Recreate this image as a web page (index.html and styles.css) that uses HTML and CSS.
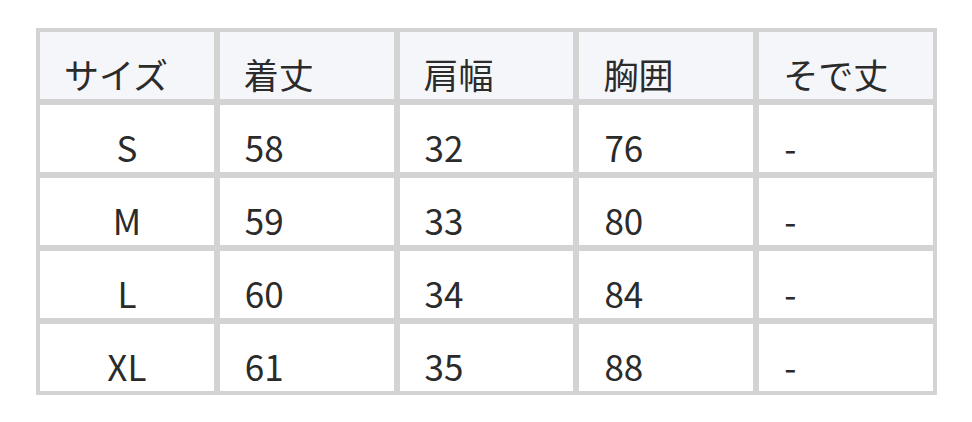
FILE: index.html
```html
<!DOCTYPE html>
<html lang="ja">
<head>
<meta charset="utf-8">
<link rel="stylesheet" href="styles.css">
</head>
<body>
<div class="page">
  <div class="size-table">
    <div class="cell head">サイズ</div>
    <div class="cell head">着丈</div>
    <div class="cell head">肩幅</div>
    <div class="cell head">胸囲</div>
    <div class="cell head">そで丈</div>

    <div class="cell label">S</div>
    <div class="cell">58</div>
    <div class="cell">32</div>
    <div class="cell">76</div>
    <div class="cell">-</div>

    <div class="cell label">M</div>
    <div class="cell">59</div>
    <div class="cell">33</div>
    <div class="cell">80</div>
    <div class="cell">-</div>

    <div class="cell label">L</div>
    <div class="cell">60</div>
    <div class="cell">34</div>
    <div class="cell">84</div>
    <div class="cell">-</div>

    <div class="cell label">XL</div>
    <div class="cell">61</div>
    <div class="cell">35</div>
    <div class="cell">88</div>
    <div class="cell">-</div>
  </div>
</div>
</body>
</html>
```

FILE: styles.css
```css
html, body {
  margin: 0;
  padding: 0;
  background: #ffffff;
}
.page {
  padding: 28px 36px;
}
.size-table {
  box-sizing: border-box;
  width: 901px;
  display: grid;
  grid-template-columns: repeat(5, 1fr);
  grid-auto-rows: 67px;
  gap: 6px;
  padding: 4px;
  background: #d3d3d3;
  font-family: "Noto Sans CJK JP", "Noto Sans", sans-serif;
  font-size: 35px;
  font-weight: 400;
  line-height: 35px;
  color: #2b2b2b;
}
.cell {
  box-sizing: border-box;
  background: #ffffff;
  padding: 24px 8px 8px 25px;
  white-space: nowrap;
}
.head {
  background: #f5f6fa;
  padding-left: 24px;
}
.label {
  text-align: center;
  padding-left: 8px;
}
```
